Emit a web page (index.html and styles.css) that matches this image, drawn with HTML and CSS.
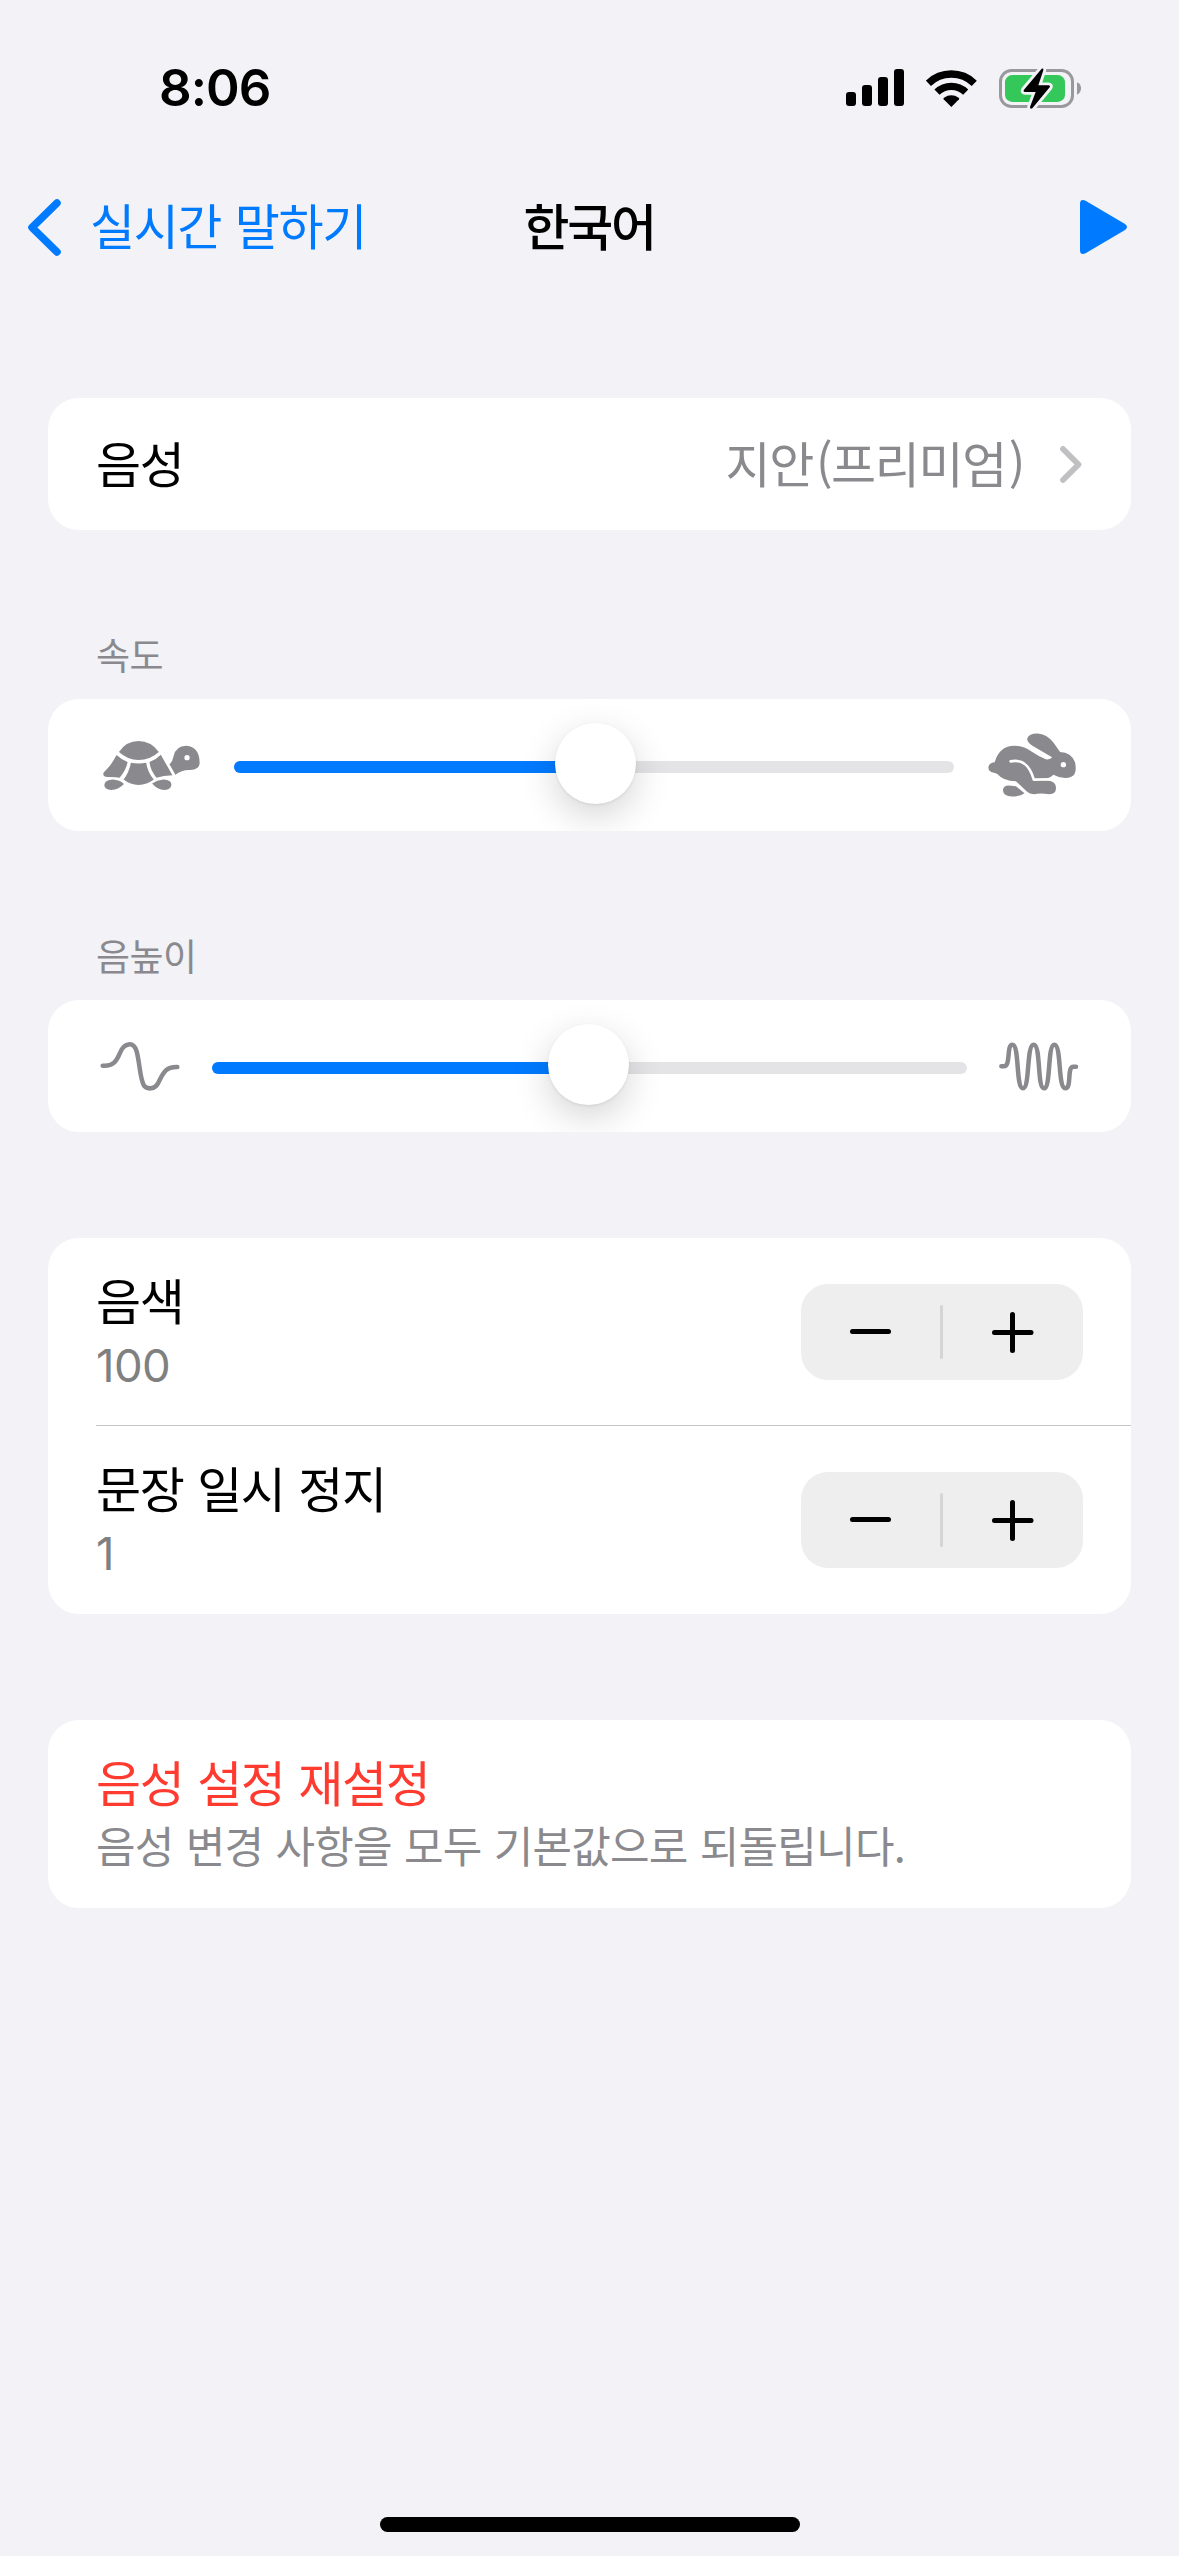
FILE: index.html
```html
<!DOCTYPE html>
<html lang="ko">
<head>
<meta charset="utf-8">
<title>한국어</title>
<link rel="stylesheet" href="styles.css">
</head>
<body>
<div class="screen">
  <header class="status">
    <span class="time">8:06</span>
    <div class="indicators">
      <svg class="signal" viewBox="0 0 58 38"><rect x="0" y="23" width="10" height="14" rx="3"/><rect x="16" y="16" width="10" height="21" rx="3"/><rect x="32" y="8" width="10" height="29" rx="3"/><rect x="48" y="0" width="10" height="37" rx="3"/></svg>
      <svg class="wifi" viewBox="318 57 153 111"><g fill="none" stroke="#000" stroke-width="22"><path d="M325.2 96.8A99 99 0 0 1 462.8 96.8"/><path d="M350.9 123.4A62 62 0 0 1 437.1 123.4"/></g><path d="M394 168L371 145Q369 142 372 140Q394 126 416 140Q419 142 417 145Z"/></svg>
      <svg class="battery" viewBox="537 51 246 123"><rect x="541.5" y="58.500" width="216" height="108" rx="33" fill="none" stroke="#98989d" stroke-width="9"/><path d="M771 94Q783 99 783 112Q783 126 771 131Z" fill="#98989d"/><rect x="555" y="72" width="180" height="81" rx="22" fill="#34c759"/><path d="M665 53L612 116Q608 123 616 123L647 123L630 168Q630 176 637 172L689 109Q692 103 685 103L655 103L670 58Q671 50 665 53Z" stroke="#f2f2f7" stroke-width="17" stroke-linejoin="round" paint-order="stroke"/></svg>
    </div>
  </header>

  <nav class="nav">
    <a class="back">
      <svg class="back-icon" viewBox="0 0 33 57"><path d="M29 4L4 28.500L29 53" fill="none" stroke="#007aff" stroke-width="7.500" stroke-linecap="round" stroke-linejoin="round"/></svg>
      <span class="back-label">실시간 말하기</span>
    </a>
    <h1 class="title">한국어</h1>
    <svg class="play" viewBox="0 0 47 54"><path d="M0 4Q0-2 6 1L45 24Q49 27 45 30L6 53Q0 56 0 50Z" fill="#007aff"/></svg>
  </nav>

  <main class="content">
    <section class="card row voice">
      <span class="label">음성</span>
      <span class="value">지안<span class="paren">(</span>프리미엄<span class="paren">)</span></span>
      <svg class="chevron" viewBox="0 0 22 37"><path d="M3 3L18.500 18.500L3 34" fill="none" stroke="#c0c0c2" stroke-width="5.800" stroke-linecap="round" stroke-linejoin="round"/></svg>
    </section>

    <h2 class="caption">속도</h2>
    <section class="card row speed">
      <svg class="turtle" viewBox="68 363 292 147" fill="#8a8a8e">
        <path d="M116 396Q138 363 175 363Q212 363 236 396Q210 420 175 420Q142 420 116 396Z"/>
        <path d="M109 405Q122 418 142 426Q138 450 118 473Q100 470 82 471Q67 471 69 460Q71 456 82 445Q93 434 109 405Z"/>
        <path d="M152 428Q175 433 198 428Q202 456 221 479Q200 495 175 495Q150 495 130 479Q147 456 152 428Z"/>
        <path d="M208 426Q228 419 242 404L277 466Q250 467 229 473Q210 450 208 426Z"/>
        <path fill-rule="evenodd" d="M268 433Q278 423 280 410Q286 377 319 377Q359 380 359 430Q358 450 330 450Q305 449 286 464ZM329 413A8 8 0 1 0 313 413A8 8 0 1 0 329 413Z"/>
        <path d="M72 495Q74 480 98 479Q118 480 131 492Q116 509 93 510Q72 509 72 495Z"/>
        <path d="M216 491Q230 481 250 479Q274 480 274 495Q272 510 250 510Q230 509 216 491Z"/>
      </svg>
      <div class="slider">
        <div class="fill" style="width: 50.14%"></div>
        <div class="thumb" style="left: 321px"></div>
      </div>
      <svg class="rabbit" viewBox="83 100 265 192" fill="#8a8a8e">
        <path d="M103 188Q117 138 163 138Q188 138 214 155Q238 171 257 179Q271 181 276 173L218 139Q201 128 201 118Q203 101 232 101Q260 103 280 128L300 157Q334 158 345 188Q350 210 344 222Q338 234 315 235Q296 234 280 225Q272 233 262 236L220 240L262 243Q288 245 288 266Q287 284 268 284Q240 279 222 284Q208 284 200 276L167 245Q128 244 112 224Q106 219 100 219Q84 217 84 203Q86 190 103 188Z"/>
        <path d="M128 272Q129 258 145 258L167 260L193 281Q180 291 155 291Q129 290 128 272Z"/>
        <path d="M151 185C192 177 210 203 221 240L290 239" fill="none" stroke="#fff" stroke-width="8" stroke-linecap="round" stroke-linejoin="round"/>
        <circle cx="310" cy="195" r="8" fill="#fff"/>
      </svg>
    </section>

    <h2 class="caption">음높이</h2>
    <section class="card row pitch">
      <svg class="wave" viewBox="62 367 238 147"><path d="M69 438C105 441 111 420 121 400C132 370 161 363 171 395C181 433 180 475 193 498C203 511 226 508 235 491C250 461 256 441 293 442" fill="none" stroke="#8a8a8e" stroke-width="13.500" stroke-linecap="round"/></svg>
      <div class="slider">
        <div class="fill" style="width: 50%"></div>
        <div class="thumb" style="left: 336px"></div>
      </div>
      <svg class="wave" viewBox="177 125 238 147"><path d="M183 198H191C212 198 198 133 216 133C238 133 226 264 248 264C269 264 258 133 280 133C302 133 290 264 311 264C332 264 321 133 342 133C364 133 352 264 375 264C395 264 379 199 399 199H407" fill="none" stroke="#8a8a8e" stroke-width="13.500" stroke-linecap="round"/></svg>
    </section>

    <section class="card group">
      <div class="item">
        <div class="texts"><span class="label">음색</span><span class="number">100</span></div>
        <div class="stepper">
          <svg viewBox="0 0 141 96"><path d="M51.500 47.500H87.500"/></svg>
          <i class="divider"></i>
          <svg viewBox="0 0 141 96"><path d="M52.500 48.500H89M70.500 30.500V66.500"/></svg>
        </div>
      </div>
      <div class="item">
        <div class="texts"><span class="label">문장 일시 정지</span><span class="number">1</span></div>
        <div class="stepper">
          <svg viewBox="0 0 141 96"><path d="M51.500 47.500H87.500"/></svg>
          <i class="divider"></i>
          <svg viewBox="0 0 141 96"><path d="M52.500 48.500H89M70.500 30.500V66.500"/></svg>
        </div>
      </div>
    </section>

    <section class="card reset">
      <span class="label danger">음성 설정 재설정</span>
      <span class="note">음성 변경 사항을 모두 기본값으로 되돌립니다.</span>
    </section>
  </main>

  <div class="home"></div>
</div>
</body>
</html>
```
FILE: styles.css
```css
* { box-sizing: border-box; }

body {
  margin: 0;
  background: #f2f2f7;
  color: #000;
  font-family: "Noto Sans CJK KR", sans-serif;
}

svg { display: block; flex: none; }

.screen {
  width: 1179px;
  height: 2556px;
  display: flex;
  flex-direction: column;
  overflow: hidden;
}

.status {
  height: 176px;
  padding: 0 98px 0 159px;
  display: flex;
  align-items: center;
  justify-content: space-between;
}

.time {
  font: 600 51px/60px Inter, sans-serif;
  letter-spacing: -0.9px;
}

.indicators { display: flex; align-items: center; }
.signal { width: 58px; height: 38px; margin-right: 22px; }
.wifi { width: 51px; height: 37px; margin-right: 22px; }
.battery { width: 82px; height: 41px; }

.nav {
  height: 102px;
  padding: 0 52px 0 28px;
  display: grid;
  grid-template-columns: 1fr 128px 1fr;
  align-items: center;
}

.back { display: flex; align-items: center; gap: 29px; }
.back-icon { width: 33px; height: 57px; }
.back-label, .label, .value {
  font-size: 49px;
  line-height: 60px;
  letter-spacing: -1.4px;
  word-spacing: 1.5px;
  white-space: nowrap;
}
.back-label { padding-bottom: 6px; color: #007aff; }

.title {
  margin: 0 -14px 0 10px;
  padding-bottom: 6px;
  font-size: 50px;
  line-height: 60px;
  font-weight: 500;
  letter-spacing: -2.2px;
  white-space: nowrap;
}

.play { width: 47px; height: 54px; justify-self: end; }

.content { padding: 120px 48px 0; flex: 1; }

.card {
  background: #fff;
  border-radius: 31px;
  overflow: hidden;
}

.row { height: 132px; display: flex; align-items: center; }
.voice { padding: 0 49px 0 48px; }
.voice .label, .value { padding-bottom: 4px; }
.value { margin-left: auto; margin-right: 36px; color: #8a8a8e; }
.paren { margin-left: 3px; }
.chevron { width: 22px; height: 37px; }

.caption {
  height: 169px;
  margin: 0;
  padding: 99px 48px 0;
  font-size: 37px;
  line-height: 50px;
  font-weight: 400;
  letter-spacing: -0.6px;
  color: #8a8a8e;
}

.slider {
  position: relative;
  flex: 1;
  height: 12px;
  margin-top: 4px;
  border-radius: 6px;
  background: #e4e4e6;
}
.fill { height: 12px; border-radius: 6px 0 0 6px; background: #007aff; }
.thumb {
  position: absolute;
  top: -38px;
  width: 81px;
  height: 81px;
  border-radius: 50%;
  background: #fff;
  box-shadow: 0 1px 3px rgba(0, 0, 0, 0.08), 0 12px 36px rgba(0, 0, 0, 0.17);
}

.speed { padding: 0 55px; }
.turtle { width: 97px; height: 49px; margin-right: 34px; }
.rabbit { width: 88px; height: 64px; margin-left: 34px; }
.pitch { padding: 0 52px 0 52px; }
.wave { width: 80px; height: 49px; }
.pitch .slider { margin-left: 32px; margin-right: 32px; }

.group { margin-top: 106px; }
.item {
  height: 188px;
  margin-left: 48px;
  padding-right: 48px;
  display: flex;
  align-items: center;
  justify-content: space-between;
}
.item:first-child { padding-top: 1px; border-bottom: 1px solid #c6c6c8; }
.texts { display: flex; flex-direction: column; margin-top: -3px; }
.number {
  font: 400 45.5px/54px Inter, sans-serif;
  margin-top: 10px;
  color: #808080;
  letter-spacing: -0.6px;
}

.stepper {
  width: 282px;
  height: 96px;
  display: flex;
  align-items: center;
  justify-content: center;
  border-radius: 27px;
  background: #eeeeee;
}
.stepper svg {
  width: 141px;
  height: 96px;
  fill: none;
  stroke: #000;
  stroke-width: 5px;
  stroke-linecap: round;
}
.divider {
  flex: none;
  width: 3px;
  height: 54px;
  margin: 0 -1px 0 -2px;
  border-radius: 2px;
  background: #d5d5d7;
}

.reset {
  height: 188px;
  margin-top: 106px;
  padding: 31px 48px 0;
  display: flex;
  flex-direction: column;
}
.danger { color: #ff3b30; }
.note {
  margin-top: 6px;
  font-size: 43px;
  line-height: 54px;
  letter-spacing: -0.8px;
  word-spacing: 1px;
  color: #8a8a8e;
  white-space: nowrap;
}

.home {
  width: 420px;
  height: 15px;
  margin: 0 auto 24px;
  border-radius: 8px;
  background: #000;
}
```
